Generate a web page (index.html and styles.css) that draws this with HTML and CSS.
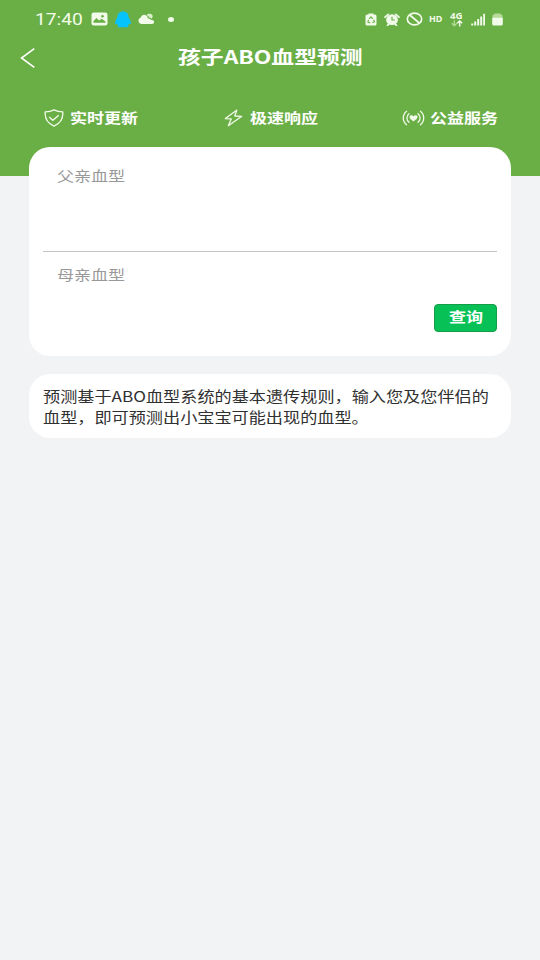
FILE: index.html
```html
<!DOCTYPE html>
<html lang="zh-CN">
<head>
<meta charset="utf-8">
<title>孩子ABO血型预测</title>
<link rel="stylesheet" href="styles.css">
</head>
<body>
<header class="hero">
  <div class="status">
    <div class="status-left">
      <span class="clock"><span class="wide">17:40</span></span>
      <svg class="ic-photo" width="17" height="14" viewBox="0 0 17 14"><rect x=".5" y=".5" width="16" height="13" rx="2.2" fill="#f2fbe9"/><path d="M2.5 10.8V9l3-3 2.7 2.6 2.5-1.8 3.8 2.8v1.2z" fill="#6aae46"/><circle cx="11.5" cy="4.3" r="1.3" fill="#6aae46"/></svg>
      <svg class="ic-qq" width="18" height="17" viewBox="0 0 18 17"><path d="M9 .6C5.600.6 3.500 2.900 3.500 5.800 3.200 7.600.8 10 1 12.400c.2 1 1.200.6 1.700.2.3.9.8 1.500 1.500 2.100-.8.500-.7 1.500.8 1.600 1.500.1 2.800 0 4-.2 1.200.2 2.500.3 4 .2 1.500-.1 1.600-1.100.8-1.600.7-.6 1.200-1.200 1.500-2.100.5.400 1.500.8 1.700-.2.2-2.400-2.200-4.800-2.500-6.600C14.500 2.900 12.400.6 9 .6z" fill="#06c4fb"/></svg>
      <svg class="ic-cloud" width="18" height="12" viewBox="0 0 18 12"><path d="M4.200 11a3.600 3.400 0 0 1-.4-6.500C4.500 2.300 6 1.600 7.600 1.800c2 .2 3.100 1.700 3.300 3.500 2.400.4 2.500 1.600 4.100 1.700 3 .3 2.700 4 0 4z" fill="#f2fbe9"/><path d="M9.700 2.300c1-2 5.100-2 5.900.5.200 1.200-.3 2.200-.9 3-.9-1-1.600-1.200-2.500-1.400-.5-1-1.400-1.700-2.500-2.100z" fill="#d9efc7"/></svg>
      <i class="dot"></i>
    </div>
    <div class="status-right">
      <svg class="ic-recycle" width="12" height="13" viewBox="0 0 12 13"><path d="M3.500.5h5v1H10q1.500 0 1.500 1.500v8q0 1.500-1.500 1.500H2Q.5 12.500.5 11V3Q.5 1.500 2 1.500h1.500z" fill="#f2fbe9"/><path d="M4.200 5.800 6 3.900l1.800 1.900M8.600 6.800l.9 2-2.100 1M5.200 9.900 2.900 9.200l.6-2.300" fill="none" stroke="#6aae46" stroke-width="1.100"/></svg>
      <svg width="16" height="13" viewBox="0 0 16 13"><ellipse cx="8" cy="6.700" rx="5.900" ry="5.400" fill="#f2fbe9"/><path d="M1 4.200 4.200 1.300M15 4.200l-3.200-2.900M3.600 12.400l1.600-2M12.400 12.400l-1.600-2" stroke="#f2fbe9" stroke-width="1.700" stroke-linecap="round"/><path d="M8 3.800V7h2.800" fill="none" stroke="#6aae46" stroke-width="1.200"/></svg>
      <svg width="17" height="14" viewBox="0 0 17 14"><ellipse cx="8.500" cy="7" rx="7.200" ry="5.800" fill="none" stroke="#f2fbe9" stroke-width="1.700"/><path d="m3.700 3 9.600 8" stroke="#f2fbe9" stroke-width="1.700"/></svg>
      <span class="hd"><span class="wide">HD</span></span>
      <span class="net"><span class="fourg"><span class="wide">4G</span></span>
        <svg width="14" height="7" viewBox="0 0 14 7"><path d="M4.300.3v5.200M1.700 3.300l2.600 2.500 2.600-2.500" fill="none" stroke="#b2db92" stroke-width="1.300"/><path d="M9.700 6.400V1M7.200 3.300 9.700.9l2.500 2.400" fill="none" stroke="#f2fbe9" stroke-width="1.500"/></svg>
      </span>
      <svg class="ic-signal" width="15" height="13" viewBox="0 0 15 13"><path d="M.2 10.500h2v2h-2zM3.200 8.500h2v4h-2zM6.200 6h2v6.500h-2zM9.200 3.500h2v9h-2zM12.200.8h1.800v11.700h-1.800z" fill="#f2fbe9"/></svg>
      <svg width="11" height="13" viewBox="0 0 11 13"><path d="M2.500.5h6v1h.7q1.300 0 1.300 1.300V5H.500V2.800Q.500 1.500 1.800 1.500h.7z" fill="#b6dc98"/><path d="M.200 4.800h10.600v6.200q0 1.500-1.500 1.500H1.700Q.200 12.500.200 11z" fill="#f2fbe9"/></svg>
    </div>
  </div>
  <div class="titlebar">
    <svg class="back" width="16" height="22" viewBox="0 0 16 22"><path d="M14.300 1.700 1.500 11l12.800 9.300" fill="none" stroke="#fff" stroke-width="1.600"/></svg>
    <h1><span class="wide">孩子ABO血型预测</span></h1>
  </div>
  <div class="features">
    <div class="feature f1">
      <svg width="20" height="18" viewBox="0 0 20 18"><path d="M10 .9C7.500 2.300 4.500 2.900 1.200 2.900c-.5 6 1.300 11 8.800 14.200 7.500-3.200 9.300-8.200 8.800-14.200C15.500 2.900 12.500 2.300 10 .9z" fill="none" stroke="#f2fbe9" stroke-width="1.300" stroke-linejoin="round"/><path d="m5.200 8 3.600 3.300 6-5" fill="none" stroke="#f2fbe9" stroke-width="1.400"/></svg>
      <span class="label"><span class="wide">实时更新</span></span>
    </div>
    <div class="feature f2">
      <svg width="20" height="18" viewBox="0 0 20 18"><path d="M12.700 1.200 1.300 9.600l6 .2-3 6.900L17.800 7.300l-7-.3z" fill="none" stroke="#f2fbe9" stroke-width="1.300" stroke-linejoin="round"/></svg>
      <span class="label"><span class="wide">极速响应</span></span>
    </div>
    <div class="feature f3">
      <svg width="23" height="16" viewBox="0 0 23 16"><path d="M4.600 1.300c-4.400 3.300-4.400 10.100 0 13.400M7 3.700c-2.800 2.300-2.800 6.300 0 8.600M18.400 1.300c4.400 3.300 4.400 10.100 0 13.400M16 3.700c2.800 2.300 2.800 6.300 0 8.600" fill="none" stroke="#f2fbe9" stroke-width="1.300" stroke-linecap="round"/><path d="M11.500 11.500C9.500 10 7.300 8.600 7.500 6.800c.3-1.900 3-2 4-.4 1-1.600 3.700-1.500 4 .4.200 1.800-2 3.200-4 4.700z" fill="#f2fbe9"/></svg>
      <span class="label"><span class="wide">公益服务</span></span>
    </div>
  </div>
</header>
<main>
  <section class="card form">
    <div class="field father"><span class="wide">父亲血型</span></div>
    <div class="field mother"><span class="wide">母亲血型</span></div>
    <button class="query" type="button"><span class="wide">查询</span></button>
  </section>
  <section class="card note">
    <p><span class="wide">预测基于ABO血型系统的基本遗传规则，输入您及您伴侣的<br>血型，即可预测出小宝宝可能出现的血型。</span></p>
  </section>
</main>
</body>
</html>
```

FILE: styles.css
```css
* { box-sizing: border-box; }
body {
  margin: 0;
  min-height: 960px;
  background: #f2f3f5;
  font-family: "Noto Sans CJK SC", sans-serif;
}
svg { display: block; flex: none; }
/* glyphs are drawn wider than they are tall across the interface */
.wide {
  display: inline-block;
  white-space: nowrap;
  transform: scaleX(1.2);
  transform-origin: left center;
}
.hero {
  height: 176px;
  background: #6aae46;
  color: #fff;
}
.status {
  display: flex;
  justify-content: space-between;
  height: 38px;
  padding: 0 37px 0 35px;
}
.status-left, .status-right { display: flex; align-items: center; }
.clock {
  width: 56px;
  padding-top: 2px;
  font: 16px/38px Roboto, sans-serif;
  color: #f2fbe9;
}
.ic-qq { margin-left: 6px; }
.ic-cloud { margin-left: 5px; }
.dot {
  width: 6px;
  height: 5px;
  margin-left: 13px;
  border-radius: 50%;
  background: #f2fbe9;
}
.status-right { gap: 6px; color: #f2fbe9; }
.ic-recycle { margin-right: 1px; }
.hd {
  width: 14px;
  font: bold 8px/38px "Noto Sans", sans-serif;
}
.hd .wide { transform: scaleX(1.12); }
.net { width: 14px; margin-left: 1px; }
.fourg { display: block; font: bold 9px/8px "Noto Sans", sans-serif; }
.fourg .wide { transform: scaleX(1.08); }
.ic-signal { margin-left: 1px; }
.titlebar {
  display: flex;
  align-items: center;
  height: 40px;
  padding-left: 20px;
}
h1 {
  margin: 0 0 5px 142px;
  font-size: 18.6px;
  line-height: 37px;
  font-weight: 700;
}
h1 .wide { transform: scaleX(1.227); }
.features {
  display: flex;
  height: 80px;
  padding-left: 44px;
  align-items: center;
}
.feature { display: flex; align-items: center; width: 180px; }
.f3 { width: auto; margin-left: -2px; }
.f3 svg { margin-right: -1px; }
.label {
  margin: 0 0 2px 6px;
  font-size: 14.2px;
  line-height: 20px;
  font-weight: 700;
}
main { padding: 0 29px; margin-top: -29px; }
.card { background: #fff; border-radius: 21px; }
.form {
  display: flex;
  flex-direction: column;
  height: 209px;
  padding: 0 14px;
}
.field {
  padding-left: 14px;
  font-size: 14.2px;
  line-height: 20px;
  color: #999;
}
.father {
  height: 105px;
  padding-top: 18px;
  border-bottom: 1px solid #c4c4c4;
}
.mother { height: 52px; padding-top: 12px; }
.query {
  align-self: flex-end;
  width: 63px;
  height: 28px;
  padding: 0 0 5px 14px;
  border: 1px solid #159c48;
  border-radius: 4px;
  background: #07c156;
  color: #fff;
  font: bold 14.2px/20px "Noto Sans CJK SC", sans-serif;
  text-align: left;
}
.note {
  height: 64px;
  margin-top: 18px;
  padding: 11px 14px;
}
.note p {
  margin: 0;
  font-size: 14.25px;
  line-height: 21px;
  color: #303030;
}
.note .wide { transform: scaleX(1.203); }
```
